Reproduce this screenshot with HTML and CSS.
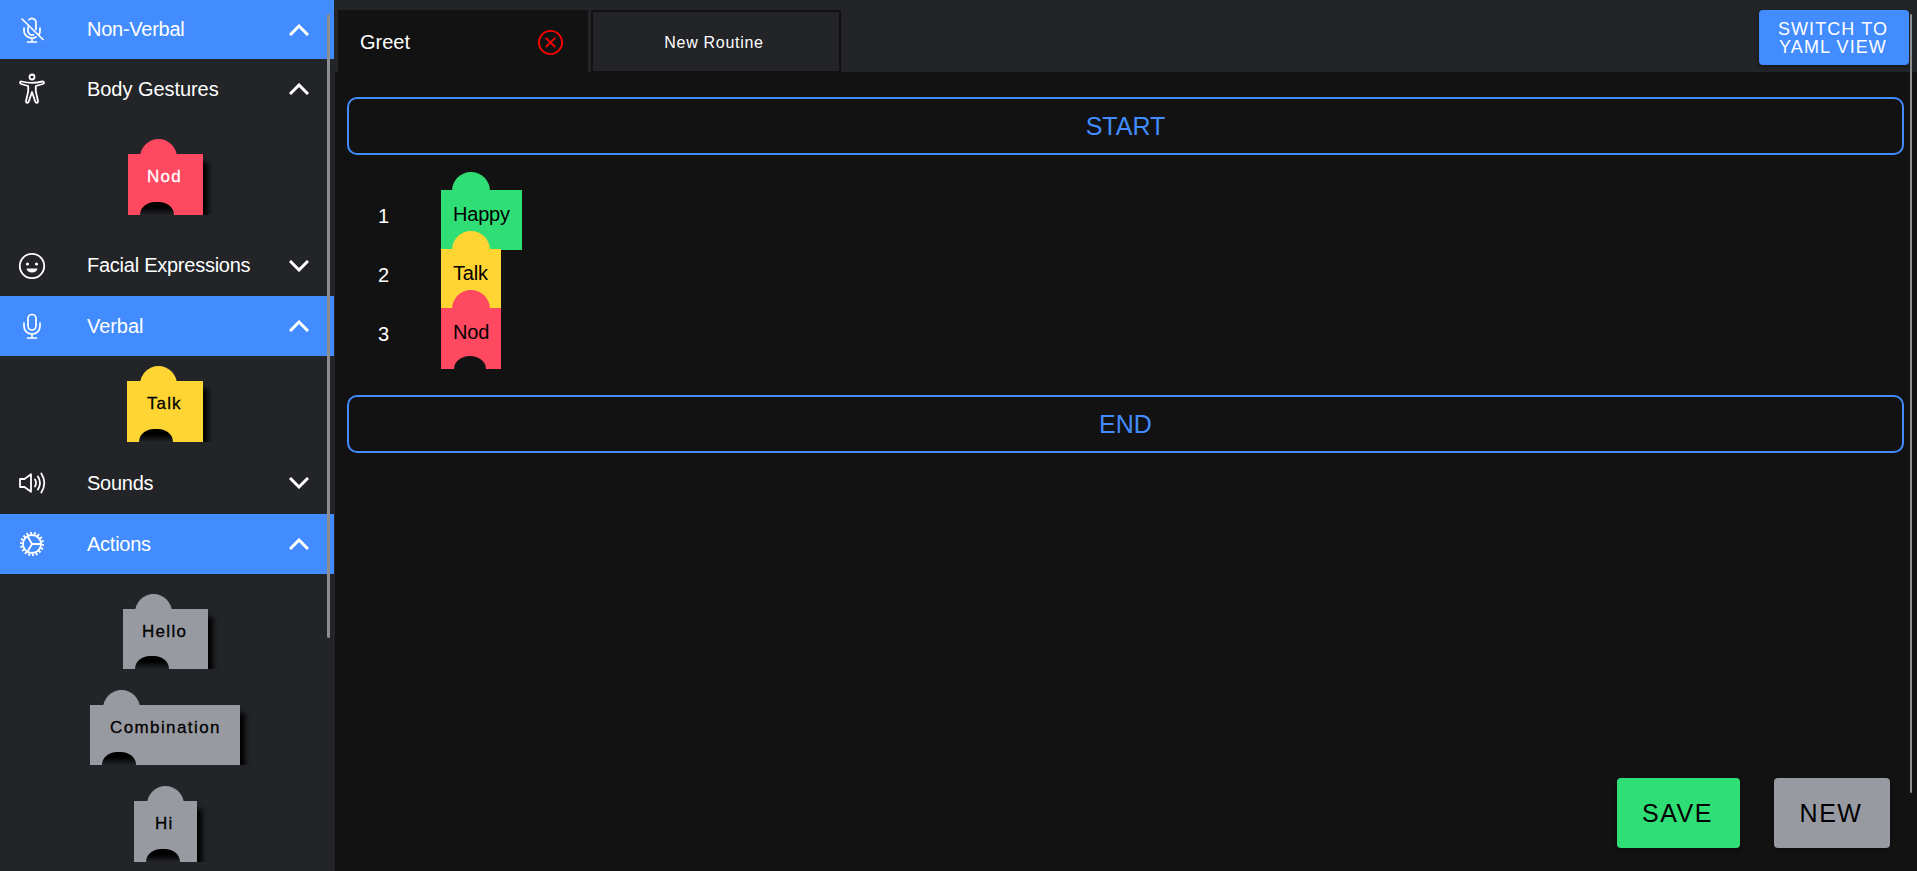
FILE: index.html
```
<!DOCTYPE html>
<html lang="en">
<head>
<meta charset="utf-8">
<title>Routine editor</title>
<link rel="stylesheet" href="styles.css">
</head>
<body>
<div class="app">
  <aside class="sidebar">
    <div class="row category first">
      <svg class="icon" viewBox="0 0 32 32"><path class="thin" d="M6 5L27 25.500M13 5.800a4 4 0 0 1 7 2.700v7M12 13v4a4 4 0 0 0 5.500 3.700M8 14v2.500a8 7.500 0 0 0 12 6.500M24 14v3q0 1.500-.6 3M16 24.500v3M11.500 28h9"/></svg>
      <span class="label">Non-Verbal</span>
      <svg class="chevron" viewBox="0 0 20 12"><path d="M1 11L10 2l9 9"/></svg>
    </div>
    <div class="row">
      <svg class="icon" viewBox="0 0 32 32"><circle cx="16" cy="4" r="2.500"/><path d="M5.500 8.500c-1.700-.4-2 2-.3 2.500l7 2v5.500L10 28c-.4 2 2 2.500 2.700.7L16 19l3.300 9.700c.7 1.800 3.100 1.300 2.700-.7l-2.200-9.500V13l7-2c1.700-.5 1.400-2.900-.3-2.500C19.500 10.300 12.500 10.300 5.500 8.500z"/></svg>
      <span class="label wide">Body Gestures</span>
      <svg class="chevron" viewBox="0 0 20 12"><path d="M1 11L10 2l9 9"/></svg>
    </div>
    <div class="tray gestures"><div class="block nod"><span>Nod</span></div></div>
    <div class="row facial">
      <svg class="icon" viewBox="0 0 32 32"><circle cx="16" cy="16" r="12.200"/><circle class="solid" cx="11.500" cy="14" r="1.600"/><circle class="solid" cx="20.500" cy="14" r="1.600"/><path class="solid" d="M10.500 18.500h11a5.600 5 0 0 1-11 0z"/></svg>
      <span class="label">Facial Expressions</span>
      <svg class="chevron" viewBox="0 0 20 12"><path d="M1 1l9 9 9-9"/></svg>
    </div>
    <div class="row category">
      <svg class="icon" viewBox="0 0 32 32"><rect class="thin" x="12" y="4.500" width="8" height="15.500" rx="4"/><path class="thin" d="M8 13v3.500a8 7.500 0 0 0 16 0V13M16 24v4M11.500 28h9"/></svg>
      <span class="label wide">Verbal</span>
      <svg class="chevron" viewBox="0 0 20 12"><path d="M1 11L10 2l9 9"/></svg>
    </div>
    <div class="tray verbal"><div class="block talk"><span>Talk</span></div></div>
    <div class="row sounds">
      <svg class="icon" viewBox="0 0 32 32"><path d="M4 12h4.500L15 7.200v17.600L8.500 20H4zM19 12.500q2 3.500 0 7M22 9.500q4 6.500 0 13M25.300 6.500q6 9.500 0 19"/></svg>
      <span class="label">Sounds</span>
      <svg class="chevron" viewBox="0 0 20 12"><path d="M1 1l9 9 9-9"/></svg>
    </div>
    <div class="row category">
      <svg class="icon" viewBox="0 0 32 32"><circle cx="16" cy="16" r="9"/><circle class="teeth" cx="16" cy="16" r="10.800" pathLength="72"/><path d="M16 16h9M16 16l-4.500-7.800M16 16l-4.500 7.800"/></svg>
      <span class="label">Actions</span>
      <svg class="chevron" viewBox="0 0 20 12"><path d="M1 11L10 2l9 9"/></svg>
    </div>
    <div class="tray actions">
      <div class="block hello"><span>Hello</span></div>
      <div class="block combination"><span>Combination</span></div>
      <div class="block hi"><span>Hi</span></div>
    </div>
    <div class="scrollbar side"></div>
  </aside>
  <main class="main">
    <header class="tabs">
      <div class="tab active"><span>Greet</span>
        <svg class="close" viewBox="0 0 24 24"><circle cx="12" cy="12" r="11.100"/><path d="M7.500 7.500l9 9M16.500 7.500l-9 9"/></svg>
      </div>
      <div class="tab new-tab"><span>New Routine</span></div>
      <button class="switch"><span>SWITCH TO</span><span>YAML VIEW</span></button>
    </header>
    <section class="workspace">
      <div class="marker"><span>START</span></div>
      <div class="steps">
        <div class="step"><span class="num">1</span><div class="piece happy"><span>Happy</span></div></div>
        <div class="step"><span class="num">2</span><div class="piece talk"><span>Talk</span></div></div>
        <div class="step"><span class="num">3</span><div class="piece nod last"><span>Nod</span></div></div>
      </div>
      <div class="marker"><span>END</span></div>
    </section>
    <footer class="buttons">
      <button class="btn save"><span>SAVE</span></button>
      <button class="btn new"><span>NEW</span></button>
    </footer>
    <div class="scrollbar page"></div>
  </main>
</div>
</body>
</html>
```
FILE: styles.css
```
* { box-sizing: border-box; }
body { margin: 0; background: #121212; color: #fff; font-family: "Liberation Sans", Arial, sans-serif; }
button { border: 0; margin: 0; padding: 0; font: inherit; }
.app { display: flex; height: 871px; overflow: hidden; }

.sidebar { position: relative; width: 335px; height: 871px; background: #222428; overflow: hidden; flex: none; }
.row { display: flex; align-items: center; width: 334px; height: 60px; padding: 0 25px 0 16px; font-size: 20px; }
.row.first { height: 59px; }
.category { background: #428cff; }
.row.facial { height: 61px; }
.row.sounds { height: 62px; }
.icon { width: 32px; height: 32px; margin-right: 39px; fill: none; stroke: #fff; stroke-width: 1.800; stroke-linecap: round; stroke-linejoin: round; flex: none; }
.icon .thin { stroke-width: 1.700; }
.icon .solid { fill: #fff; stroke: none; }
.icon .teeth { stroke-width: 2.600; stroke-dasharray: 2 2; stroke-linecap: butt; }
.label { flex: 1; white-space: nowrap; letter-spacing: -.25px; }
.label.wide { letter-spacing: -.05px; }
.chevron { width: 20px; height: 12px; fill: none; stroke: #fff; stroke-width: 3; }

.tray { display: flex; flex-direction: column; align-items: center; width: 334px; }
.gestures { height: 116px; padding-top: 35px; }
.verbal { height: 96px; padding-top: 25px; }
.actions { padding-top: 35px; gap: 36px; }
.block { position: relative; height: 60px; font-size: 17px; line-height: 20px; letter-spacing: 1.300px; -webkit-text-stroke: .3px; color: #000; padding: 13px 0 0 19px; background: #989aa2; box-shadow: 7px 6px 5px -2px #000; clip-path: inset(-16px -14px 0 0); }
.block::before { content: ""; position: absolute; left: 12px; top: -15px; width: 37px; height: 37px; border-radius: 50%; background: inherit; }
.block::after { content: ""; position: absolute; left: 12px; bottom: 0; width: 34px; height: 13px; border-radius: 15px 15px 0 0 / 13px 13px 0 0; background: linear-gradient(#000 40%, #222428); }
.block span, .piece span { position: relative; z-index: 1; }
.block.nod { width: 75px; height: 61px; margin-right: 3px; background: #ff4961; color: #fff; }
.block.talk { width: 76px; height: 61px; margin-right: 4px; padding-left: 20px; letter-spacing: 1.100px; background: #ffd534; }
.block.talk::before { left: 13px; }
.block.hello { width: 85px; margin-right: 3px; }
.block.combination { width: 150px; margin-right: 4px; padding-left: 20px; letter-spacing: 1.400px; }
.block.combination::before { left: 13px; }
.block.hi { width: 63px; height: 61px; margin-right: 3px; padding-left: 21px; }
.block.hi::before { left: 13px; }

.scrollbar { position: absolute; background: #8c8d8f; border-radius: 2px; }
.side { left: 327px; top: 14px; width: 3px; height: 624px; }
.page { right: 5px; top: 14px; width: 2px; height: 779px; }

.main { position: relative; flex: 1; display: flex; flex-direction: column; }
.tabs { display: flex; align-items: flex-start; height: 72px; padding: 10px 8px 0 3px; background: #222428; }
.tab { display: flex; align-items: center; height: 62px; flex: none; }
.tab.active { width: 250px; margin-right: 3px; padding: 2px 25px 0 22px; justify-content: space-between; background: #121212; font-size: 20px; }
.close { width: 25px; height: 25px; fill: none; stroke: #f00; stroke-width: 1.800; }
.new-tab { width: 250px; padding: 2px 4px 0 0; justify-content: center; border: 2px solid #121212; border-bottom-width: 1px; font-size: 16px; letter-spacing: .7px; }
.switch { display: flex; flex-direction: column; align-items: center; justify-content: center; width: 150px; height: 55px; margin-left: auto; padding-right: 2px; border-radius: 4px; background: #428cff; color: #fff; font-size: 18px; line-height: 18px; letter-spacing: 1.100px; box-shadow: 0 2px 4px rgba(0,0,0,.4); }

.workspace { padding: 25px 13px 0 12px; }
.marker { display: flex; align-items: center; justify-content: center; height: 58px; border: 2px solid #428cff; border-radius: 10px; color: #428cff; font-size: 25px; }
.steps { height: 240px; padding-top: 35px; }
.step { display: flex; height: 59px; }
.num { width: 94px; padding: 14px 0 0 31px; font-size: 20px; line-height: 24px; }
.piece { position: relative; width: 60px; height: 60px; padding: 12px 0 0 12px; font-size: 20px; line-height: 24px; letter-spacing: -.2px; color: #000; }
.piece::before { content: ""; position: absolute; left: 11px; top: -18px; width: 38px; height: 38px; border-radius: 50%; background: inherit; }
.happy { width: 81px; background: #2fdf75; }
.piece.talk { background: #ffd534; }
.piece.nod { height: 61px; background: #ff4961; }
.last::after { content: ""; position: absolute; left: 13px; bottom: 0; width: 32px; height: 13px; border-radius: 16px 16px 0 0 / 13px 13px 0 0; background: #121212; }

.buttons { display: flex; gap: 34px; justify-content: flex-end; margin-top: auto; padding: 0 27px 23px 0; }
.btn { height: 70px; border-radius: 4px; font-size: 25px; letter-spacing: 1.500px; color: #000; box-shadow: 0 2px 4px rgba(0,0,0,.4); }
.save { width: 123px; padding-right: 2px; background: #2fdf75; }
.new { width: 116px; padding-right: 2px; background: #989aa2; }
```
